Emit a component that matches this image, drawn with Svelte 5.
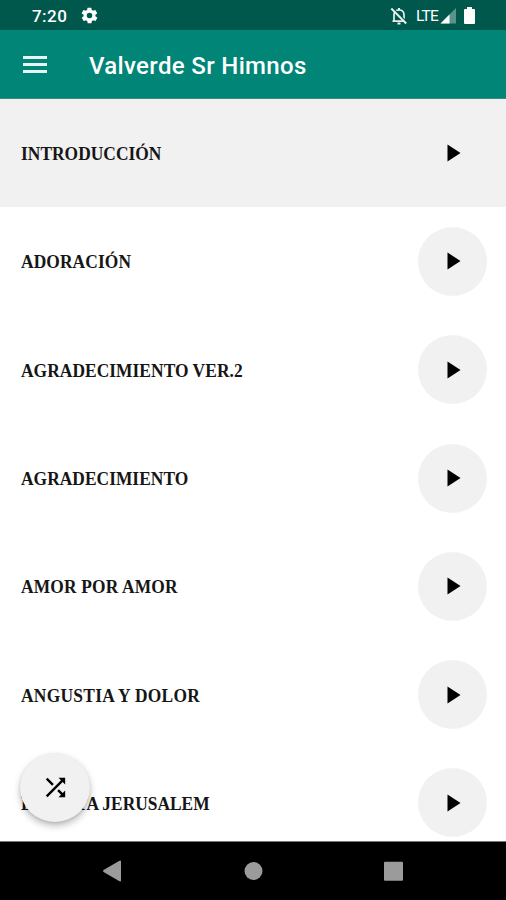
<script>
  const songs = [
    { name: 'INTRODUCCIÓN', spacing: 0.03 },
    { name: 'ADORACIÓN', spacing: 0.1 },
    { name: 'AGRADECIMIENTO VER.2', spacing: 0.05 },
    { name: 'AGRADECIMIENTO', spacing: 0.03 },
    { name: 'AMOR POR AMOR', spacing: 0.17 },
    { name: 'ANGUSTIA Y DOLOR', spacing: 0.28 },
    { name: 'BENDITA JERUSALEM', spacing: 0 }
  ];
  let selected = $state(0);
</script>

<div class="screen">
  <div class="status">
    <span class="time">7:20</span>
    <svg class="gear" viewBox="0 0 24 24" width="19" height="19"><path fill="#fff" d="M19.4 13a7.5 7.5 0 0 0 0-2l2.1-1.6a.5.5 0 0 0 .1-.7l-2-3.4a.5.5 0 0 0-.6-.2l-2.5 1a7.300 7.300 0 0 0-1.700-1l-.4-2.600a.5.5 0 0 0-.5-.4h-4a.5.5 0 0 0-.5.4l-.4 2.600a7.700 7.700 0 0 0-1.700 1l-2.500-1a.5.5 0 0 0-.6.2l-2 3.400a.5.5 0 0 0 .1.7L4.600 11a7.500 7.500 0 0 0 0 2l-2.100 1.600a.5.5 0 0 0-.1.700l2 3.400c.1.2.4.3.6.2l2.500-1c.5.4 1.100.7 1.700 1l.4 2.600c0 .2.200.4.500.4h4c.2 0 .5-.2.5-.4l.4-2.600c.6-.3 1.200-.6 1.700-1l2.500 1c.2.1.5 0 .6-.2l2-3.400a.5.5 0 0 0-.1-.7zM12 15.500a3.500 3.500 0 1 1 0-7 3.500 3.500 0 0 1 0 7z"/></svg>
    <div class="right">
      <svg width="18" height="18" viewBox="0 0 18 18">
        <path d="M4 14V8Q4 3 9 3T14 8V14M2.500 14.200H15.500" fill="none" stroke="#e8f1ef" stroke-width="1.700"/>
        <path d="M9 1v2M7.500 16.500h3" stroke="#e8f1ef" stroke-width="2"/>
        <path d="M2.500 .8L17 15.300" stroke="#00574b" stroke-width="1.500"/>
        <path d="M1.300 1.500L16.200 16.500" stroke="#e8f1ef" stroke-width="1.900"/>
      </svg>
      <span class="lte">LTE</span>
      <svg class="signal" width="16" height="16" viewBox="0 0 16 16"><path d="M16 0V15.500H.5z" fill="#5a938a"/><path d="M9.500 6.500V15.500H.5z" fill="#fff"/></svg>
      <svg class="battery" width="11" height="17" viewBox="0 0 11 17"><path d="M3 0H8V2H10Q11 2 11 3V16Q11 17 10 17H1Q0 17 0 16V3Q0 2 1 2H3z" fill="#fff"/></svg>
    </div>
  </div>

  <header>
    <button class="menu" aria-label="Menu"><i></i><i></i><i></i></button>
    <h1>Valverde Sr Himnos</h1>
  </header>

  <main>
    {#each songs as song, i}
      <div class="row" class:selected={selected === i}>
        <span class="title" style="letter-spacing: {song.spacing}px">{song.name}</span>
        <button class="play" aria-label="Play" onclick={() => (selected = i)}>
          <svg width="14" height="18" viewBox="0 0 14 18"><path d="M.5 .5L13.500 9L.5 17.500z"/></svg>
        </button>
      </div>
    {/each}
    <button class="shuffle" aria-label="Shuffle">
      <svg width="29" height="29" viewBox="0 0 24 24"><path d="M10.590 9.170L5.410 4 4 5.410l5.170 5.170 1.420-1.410zM14.500 4l2.040 2.040L4 18.590 5.410 20 17.960 7.460 20 9.500V4h-5.500zm.33 9.410l-1.410 1.410 3.130 3.130L14.500 20H20v-5.500l-2.040 2.040-3.130-3.130z"/></svg>
    </button>
  </main>

  <nav>
    <svg width="506" height="58" viewBox="0 0 506 58" fill="#9b9b9b">
      <path d="M121 19.500V38.500Q121 40 119.500 39.300L103.500 30Q102.500 29 103.500 28L119.500 18.700Q121 18 121 19.500z"/>
      <circle cx="253.500" cy="29" r="9"/>
      <rect x="384" y="19.800" width="19" height="19" rx="1"/>
    </svg>
  </nav>
</div>

<style>
  .screen { width: 506px; height: 900px; display: flex; flex-direction: column; overflow: hidden; background: #fff; font-family: Roboto, sans-serif; }
  button { border: 0; padding: 0; background: none; }
  svg { display: block; flex: none; }
  .status { height: 30px; flex: none; box-sizing: border-box; background: #00574b; display: flex; align-items: center; padding: 0 31px 0 32px; color: #fff; }
  .time { font-size: 17px; font-weight: 500; line-height: 30px; width: 48px; letter-spacing: .45px; padding-top: 1px; }
  .gear { margin-top: 1px; }
  .right { margin-left: auto; display: flex; align-items: center; padding-top: 1px; }
  .lte { font-size: 15.500px; line-height: 30px; width: 23px; margin-left: 8px; letter-spacing: -.8px; }
  .signal { margin-left: 1px; }
  .battery { margin-left: 8px; }
  header { height: 69px; flex: none; box-sizing: border-box; background: #008577; border-bottom: 1px solid #45867f; display: flex; align-items: center; padding-left: 23px; color: #fff; }
  .menu { width: 24px; height: 17px; display: flex; flex-direction: column; justify-content: space-between; }
  .menu i { height: 3px; background: #e9f5f3; }
  h1 { margin: 3px 0 0 42px; font-size: 24px; letter-spacing: .34px; font-weight: 500; line-height: 30px; white-space: nowrap; }
  main { flex: 1; min-height: 0; position: relative; overflow: hidden; }
  .row { height: 108.300px; box-sizing: border-box; display: flex; align-items: center; justify-content: space-between; padding: 0 19px 0 21px; }
  .selected { background: #f1f1f1; }
  .title { font: bold 17.400px/24px "Liberation Serif", serif; color: #161616; white-space: nowrap; padding-top: 2px; transform: scaleY(1.03); }
  .play { width: 69px; height: 69px; border-radius: 50%; background: #f1f1f1; display: flex; align-items: center; justify-content: center; padding-left: 3px; }
  .shuffle { position: absolute; left: 20px; top: 654px; width: 70px; height: 69px; border-radius: 50%; background: #f1f1f1; box-shadow: 0 4px 7px rgba(0,0,0,.25), 0 1px 3px rgba(0,0,0,.1); display: flex; align-items: center; justify-content: center; }
  nav { height: 59px; flex: none; box-sizing: border-box; background: #000; border-top: 1px solid #777; }
</style>
